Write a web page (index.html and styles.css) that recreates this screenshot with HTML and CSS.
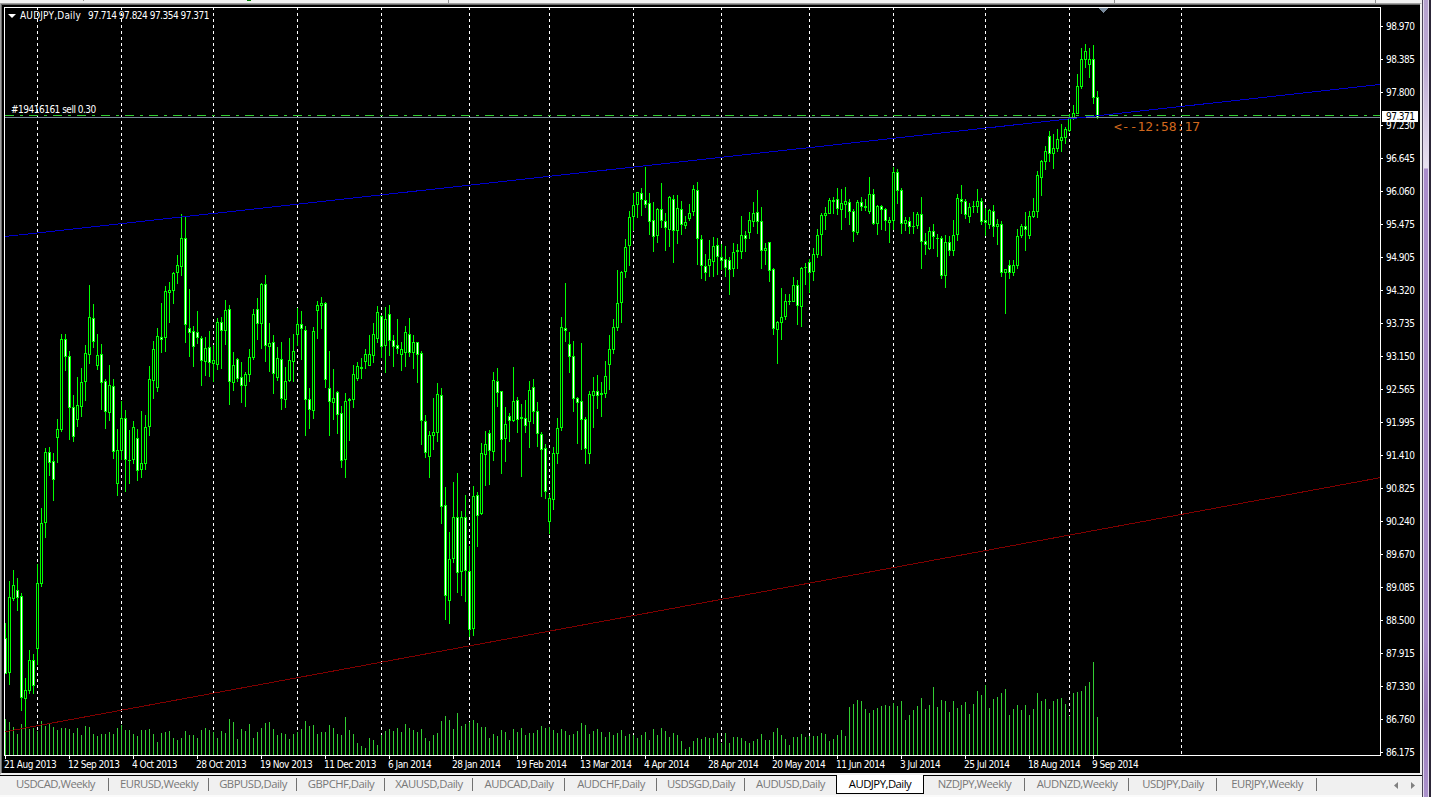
FILE: index.html
```html
<!DOCTYPE html>
<html lang="en">
<head>
    <meta charset="UTF-8">
    <title>AUDJPY,Daily</title>
    <link rel="stylesheet" href="styles.css">
</head>
<body>
    <div class="app">
        <div class="terminal">
            <div class="toolbar">
                <i class="sep sep-1"></i><i class="dot"></i><i class="sep sep-2"></i><i class="sep sep-3"></i><i class="sep sep-4"></i>
            </div>

            <div class="chart-window">
                <div class="plot">
                    <svg id="chart" width="1377" height="749" viewBox="4 7 1377 749" shape-rendering="crispEdges">
                        <g id="grid"></g>
                        <g id="volumes"></g>
                        <g id="candles"></g>
                        <line class="trend-low" x1="5" y1="731.7" x2="1380" y2="477.7"/>
                        <line class="order-line" x1="5" y1="115.5" x2="1380" y2="115.5"/>
                        <line class="bid-line" x1="5" y1="117.5" x2="1380" y2="117.5"/>
                        <line class="trend-high" x1="5" y1="236.5" x2="1380" y2="84.5"/>
                        <path class="shift" d="M1099 8h9v1h-1v1h-1v1h-1v1h-1v1h-1v-1h-1v-1h-1v-1h-1v-1h-1z"/>
                        <path class="frame" d="M4.5 756V7.5H1380.5V755.5H4"/>
                    </svg>
                    <div class="title"><span class="arrow"></span><span class="symbol">AUDJPY,Daily</span><span class="ohlc">97.714 97.824 97.354 97.371</span></div>
                    <div class="order">#19416161 sell 0.30</div>
                    <div class="countdown">&lt;--12:58:17</div>
                </div>
                <div class="prices" id="prices">
                    <div class="bid">97.371</div>
                </div>
                <div class="dates" id="dates"></div>
            </div>

            <div class="tabs">
                <div class="tab" style="width:107px">USDCAD,Weekly</div>
                <div class="tab" style="width:100px">EURUSD,Weekly</div>
                <div class="tab" style="width:88px">GBPUSD,Daily</div>
                <div class="tab" style="width:88px">GBPCHF,Daily</div>
                <div class="tab" style="width:88px">XAUUSD,Daily</div>
                <div class="tab" style="width:92px">AUDCAD,Daily</div>
                <div class="tab" style="width:92px">AUDCHF,Daily</div>
                <div class="tab" style="width:88px">USDSGD,Daily</div>
                <div class="tab last" style="width:91px">AUDUSD,Daily</div>
                <div class="tab active" style="width:88px">AUDJPY,Daily</div>
                <div class="tab" style="width:101px">NZDJPY,Weekly</div>
                <div class="tab" style="width:104px">AUDNZD,Weekly</div>
                <div class="tab" style="width:88px">USDJPY,Daily</div>
                <div class="tab" style="width:100px">EURJPY,Weekly</div>
                <div class="scroll">
                    <svg width="4" height="7"><path d="M4 0v7L0 3.5z"/></svg>
                    <svg width="4" height="7"><path d="M0 0v7l4-3.5z"/></svg>
                </div>
            </div>
        </div>
        <div class="edge"><div class="scroll-track"></div></div>
    </div>
    <script src="chart.js"></script>
</body>
</html>
```
FILE: styles.css
```css
body {
    margin: 0;
    background: #f0f0f0;
    font-family: "DejaVu Sans Condensed", "DejaVu Sans", sans-serif;
    font-stretch: condensed;
    font-size: 10px;
    letter-spacing: -0.5px;
    overflow: hidden;
}
.app {
    display: flex;
    width: 1431px;
    height: 797px;
}
.terminal {
    display: flex;
    flex-direction: column;
    width: 1422px;
}

/* bottom edge of the toolbar */
.toolbar {
    display: flex;
    height: 3px;
    background: #f0f0f0;
}
.sep {
    width: 1px;
    height: 3px;
    background: #909090;
}
.sep-1 {
    height: 1px;
    margin-left: 83px;
}
.dot {
    width: 4px;
    height: 1px;
    margin-left: 163px;
    background: #008000;
}
.sep-2 {
    margin-left: 197px;
}
.sep-3 {
    margin-left: 665px;
}
.sep-4 {
    margin-left: 260px;
}

/* chart window */
.chart-window {
    display: grid;
    grid-template-columns: 1377px 39px;
    grid-template-rows: 749px 17px;
    box-sizing: border-box;
    height: 772px;
    padding: 3px 0 0 2px;
    border-top: 1px solid #a0a0a0;
    border-left: 1px solid #a0a0a0;
    border-right: 2px solid #f0f0f0;
    border-bottom: 2px solid #f0f0f0;
    background: #000;
    box-shadow: inset 1px 1px #696969;
    color: #fff;
}
.plot {
    position: relative;
    margin-left: 1px;
}
.plot svg {
    display: block;
}
.month {
    stroke: #fff;
    stroke-dasharray: 3 3;
}
.volume {
    stroke: #32cd32;
}
.wick {
    stroke: #0f0;
}
.up {
    fill: #000;
    stroke: #0f0;
}
.down {
    fill: #fff;
    stroke: #0f0;
}
.trend-low {
    stroke: #800000;
}
.trend-high {
    stroke: #0000cd;
}
.order-line {
    stroke: #32cd32;
    stroke-dasharray: 9 6 3 6;
}
.bid-line {
    stroke: #778899;
}
.shift {
    fill: #778899;
}
.frame {
    fill: none;
    stroke: #fff;
}
.title {
    position: absolute;
    left: 4px;
    top: 2px;
    display: flex;
    align-items: center;
    height: 13px;
    white-space: pre;
}
.arrow {
    border: 4px solid transparent;
    border-top-color: #fff;
    border-bottom: 0;
    margin-right: 4px;
}
.symbol {
    width: 68px;
    letter-spacing: 0.2px;
}
.order {
    position: absolute;
    left: 7px;
    top: 96px;
    line-height: 13px;
}
.countdown {
    position: absolute;
    left: 1110px;
    top: 112px;
    font: 13px/16px "DejaVu Sans Mono", monospace;
    letter-spacing: 0;
    color: #d2691e;
}

/* axes */
.prices {
    position: relative;
    margin-left: 1px;
    padding-top: 3px;
}
.price {
    display: flex;
    align-items: center;
    height: 33px;
    line-height: 33px;
}
.price::before {
    content: "";
    width: 2px;
    height: 1px;
    margin-right: 3px;
    background: #fff;
}
.bid {
    position: absolute;
    left: 1px;
    top: 104px;
    width: 36px;
    height: 11px;
    line-height: 11px;
    text-indent: 4px;
    background: #fff;
    color: #000;
}
.dates {
    display: flex;
    grid-column: 1 / 3;
    margin-left: 1px;
}
.date {
    width: 64px;
    line-height: 17px;
    white-space: nowrap;
}
.date::before {
    content: "";
    display: block;
    width: 1px;
    height: 3px;
    margin: 0 0 -3px 1px;
    background: #fff;
}

/* chart tabs */
.tabs {
    display: flex;
    box-sizing: border-box;
    height: 22px;
    padding-left: 2px;
    border-top: 1px solid #000;
    border-bottom: 2px solid #fafafa;
    background: #f0f0f0;
    font: 11.3px/16px "Open Sans", sans-serif;
    letter-spacing: -0.5px;
    color: #787878;
}
.tab {
    position: relative;
    height: 18px;
    text-align: center;
    white-space: nowrap;
}
.tab::after {
    content: "";
    position: absolute;
    right: 0;
    top: 2px;
    width: 1px;
    height: 13px;
    background: #707070;
}
.tab.last::after,
.tab.active::after {
    display: none;
}
.tab.active {
    box-sizing: border-box;
    height: 19px;
    margin-top: -1px;
    padding-top: 1px;
    border: 1px solid #000;
    border-top: 0;
    background: #fff;
    color: #000;
}
.scroll {
    display: flex;
    gap: 13px;
    align-items: center;
    margin-left: auto;
    padding-right: 7px;
    fill: #808080;
}

/* window edge on the right */
.edge {
    box-sizing: border-box;
    width: 9px;
    border-left: 1px solid #4a4358;
    border-right: 2px solid #2c2638;
    background: #e4dcee;
}
.scroll-track {
    width: 4px;
    height: 797px;
    margin-left: 1px;
    background: linear-gradient(#b5a1ce, #bba8d2 60px, #e8e1f0 168px, #a98cca 169px, #a98cca 640px, #9878b8 710px, #ab92cc);
}
```
FILE: chart.js
```js
const SVG = 'http://www.w3.org/2000/svg';
const STEP = 4;
const FIRST = 5;
const BASE = 755;

// high, body top, body bottom, low, 1 = bearish
const candles = [
    [623,638,673,674,1],[581,597,672,685,0],[570,585,598,601,0],[578,590,597,611,1],[593,596,697,711,1],[678,690,698,727,0],
    [650,660,690,694,0],[654,660,685,694,1],[564,583,648,665,0],[508,523,583,587,0],[448,452,522,538,0],[447,452,462,476,1],
    [453,461,479,501,1],[419,429,437,463,0],[334,339,429,432,0],[334,339,356,371,1],[351,356,407,440,1],[395,407,436,442,1],
    [377,405,419,427,0],[368,382,406,417,0],[345,353,381,401,0],[285,317,354,364,0],[304,318,341,348,1],[334,355,365,370,0],
    [344,354,382,410,1],[379,381,411,429,1],[365,385,412,421,0],[379,386,451,459,1],[429,450,483,496,0],[401,418,450,460,0],
    [410,418,459,492,1],[430,460,460,484,0],[421,427,459,464,0],[429,438,470,481,1],[411,463,469,478,0],[415,427,463,470,0],
    [366,379,426,436,0],[341,349,380,399,0],[328,336,387,392,0],[303,337,339,353,1],[286,291,337,352,0],[282,290,292,323,0],
    [272,273,290,304,0],[255,265,272,284,0],[214,238,266,276,0],[217,238,324,343,1],[289,328,332,357,1],[326,331,346,367,1],
    [311,332,337,344,1],[336,338,360,386,1],[337,348,361,376,0],[331,347,362,377,1],[345,360,363,382,0],[318,322,364,370,0],
    [317,322,330,369,1],[300,310,330,345,0],[305,309,381,405,1],[352,365,382,391,0],[358,359,378,382,1],[362,377,385,403,1],
    [372,374,385,407,0],[349,357,374,382,0],[309,314,357,360,0],[298,309,323,340,1],[283,284,323,349,0],[275,284,345,362,1],
    [323,343,346,372,0],[335,342,373,394,1],[347,358,377,381,0],[342,359,398,410,1],[367,381,399,408,0],[338,360,380,382,0],
    [334,351,361,382,0],[308,324,334,346,0],[311,324,328,360,1],[326,330,399,436,1],[388,399,409,429,1],[327,331,410,419,0],
    [301,305,310,339,0],[297,303,305,329,0],[302,303,379,388,1],[351,388,401,436,1],[369,398,402,420,0],[391,392,414,434,1],
    [406,413,460,468,1],[393,401,459,478,0],[398,399,400,441,0],[365,374,399,408,0],[362,366,378,381,0],[358,367,368,379,0],
    [349,354,361,369,0],[335,354,365,366,0],[323,334,355,363,0],[306,312,338,343,0],[315,316,346,358,1],[307,319,345,373,0],
    [305,314,340,356,1],[335,340,346,367,1],[319,345,348,354,1],[342,349,354,371,0],[326,332,352,367,0],[318,334,352,357,1],
    [335,342,352,369,0],[342,342,354,383,1],[351,353,420,445,1],[415,421,452,458,1],[431,435,456,478,0],[398,432,435,450,0],
    [383,394,432,442,0],[388,395,506,524,1],[487,505,595,620,1],[532,559,600,624,0],[482,517,558,563,0],[473,517,572,593,1],
    [511,517,571,596,0],[495,517,570,602,1],[546,571,629,637,1],[486,496,628,636,0],[492,495,515,547,1],[443,453,513,515,0],
    [431,444,454,486,0],[430,433,450,485,1],[372,380,451,461,0],[368,381,392,407,1],[391,391,439,474,1],[407,424,438,462,0],
    [413,416,420,442,1],[367,401,420,422,0],[397,400,419,433,1],[404,417,418,477,0],[400,418,425,433,1],[381,390,421,448,0],
    [379,387,411,424,1],[402,411,433,447,1],[432,434,449,497,1],[444,448,491,499,1],[494,498,521,534,0],[447,453,499,510,0],
    [418,428,453,464,0],[317,327,427,431,0],[283,328,330,342,1],[332,344,356,373,1],[341,356,398,412,1],[397,398,402,444,1],
    [343,401,419,450,1],[417,419,448,464,1],[391,394,453,464,0],[377,391,395,428,0],[375,391,395,409,1],[382,393,394,417,0],
    [361,376,393,398,0],[335,349,364,390,0],[319,327,349,354,0],[270,303,327,331,0],[271,272,302,323,0],[239,247,271,278,0],
    [211,217,245,266,0],[193,205,216,231,0],[192,192,204,218,0],[188,193,199,216,1],[167,200,204,208,1],[193,203,221,235,1],
    [202,220,236,252,1],[208,209,235,243,0],[183,209,220,228,1],[213,221,227,251,1],[196,197,229,247,0],[195,199,230,263,1],
    [195,208,230,244,0],[201,209,224,235,1],[216,222,225,229,0],[204,213,218,221,0],[185,189,211,216,0],[182,190,238,265,1],
    [235,239,265,279,1],[254,266,272,281,1],[240,259,265,277,0],[237,246,261,277,0],[238,245,256,275,1],[244,257,260,270,1],
    [246,259,267,277,1],[257,260,269,295,1],[243,252,268,277,0],[244,250,251,269,0],[216,235,251,259,0],[231,235,238,252,1],
    [212,220,232,239,0],[202,213,221,227,0],[190,212,221,234,1],[207,221,250,269,1],[243,248,250,265,0],[242,242,270,282,1],
    [268,269,328,335,1],[321,322,329,364,0],[288,317,322,340,0],[294,301,316,320,0],[294,301,301,305,0],[277,285,301,302,0],
    [280,285,305,325,1],[267,268,306,327,0],[263,267,267,285,0],[259,262,272,293,1],[248,254,271,281,0],[229,235,254,258,0],
    [213,215,234,256,0],[207,213,215,230,0],[198,200,213,214,0],[197,200,201,214,0],[188,199,208,215,1],[189,203,209,230,0],
    [187,201,204,218,0],[199,202,211,225,1],[209,211,231,242,1],[200,202,232,235,0],[197,202,206,211,1],[199,206,207,211,0],
    [177,194,211,214,0],[189,194,223,225,1],[205,206,223,235,0],[205,206,209,230,1],[208,209,220,231,1],[217,220,222,243,0],
    [167,172,220,230,0],[169,172,190,204,1],[188,190,223,234,1],[217,220,223,231,0],[217,221,226,234,1],[212,226,226,234,0],
    [212,214,225,229,0],[197,214,241,269,1],[233,241,244,255,1],[227,231,248,250,0],[224,231,236,249,1],[234,238,238,257,0],
    [236,238,275,279,1],[235,242,275,288,0],[236,242,250,256,1],[220,235,250,256,0],[194,198,234,241,0],[185,199,201,214,1],
    [199,201,214,219,1],[203,207,216,223,0],[201,206,206,213,0],[189,201,206,213,0],[198,201,221,225,1],[208,220,222,236,1],
    [209,210,224,229,0],[205,211,226,237,1],[219,224,226,245,0],[221,224,272,277,1],[269,269,272,314,0],[260,265,272,279,1],
    [260,265,272,276,0],[229,236,265,269,0],[224,226,235,238,0],[212,226,229,251,1],[211,216,235,239,0],[198,211,216,218,0],
    [171,175,211,218,0],[160,161,177,196,0],[146,151,161,170,0],[131,136,153,162,1],[134,148,153,169,0],[129,139,148,152,0],
    [124,137,140,152,0],[127,129,137,144,0],[114,117,130,132,0],[105,113,117,120,0],[74,86,113,114,0],[48,59,86,89,0],
    [44,51,59,68,0],[48,59,64,78,0],[45,59,97,104,1],[91,97,117,119,1]
];

// top of each volume bar
const volumes = [
    719,722,727,734,724,726,729,728,731,721,726,724,727,730,728,728,729,733,728,735,726,727,734,736,734,734,732,734,728,725,
    730,730,734,736,730,730,729,734,742,733,732,731,738,740,738,731,735,735,738,730,728,730,732,738,731,733,719,722,739,729,
    731,724,738,732,728,723,722,729,735,733,734,739,734,732,729,721,726,725,734,732,732,725,728,734,735,717,730,734,743,746,
    748,738,740,745,735,731,729,731,728,732,724,728,730,732,729,738,741,735,733,721,716,720,729,713,726,724,722,720,723,727,
    727,738,734,736,730,732,740,729,732,728,735,733,733,730,726,728,727,730,733,729,731,735,734,731,723,725,734,731,729,732,
    737,732,735,733,730,736,734,735,738,735,732,740,729,735,728,731,737,733,735,741,749,747,741,738,739,737,738,738,733,743,
    733,743,737,737,738,741,743,741,739,734,740,740,732,728,735,739,745,737,737,734,737,736,736,736,733,734,741,739,735,730,
    736,707,704,700,701,709,713,710,708,706,705,706,703,706,701,720,715,710,706,698,709,705,687,707,700,701,712,701,708,705,
    702,714,704,691,695,685,708,699,697,693,689,715,709,705,710,705,715,709,693,701,699,709,701,699,698,704,716,693,692,691,
    686,682,662,717
];

const months = [37,121,213,297,381,469,549,633,721,809,893,985,1069,1181];

const prices = ['98.970','98.385','97.800','97.230','96.645','96.060','95.475','94.905','94.320','93.735','93.150','92.565',
    '91.995','91.410','90.825','90.240','89.670','89.085','88.500','87.915','87.330','86.760','86.175'];

const dates = ['21 Aug 2013','12 Sep 2013','4 Oct 2013','28 Oct 2013','19 Nov 2013','11 Dec 2013','6 Jan 2014','28 Jan 2014',
    '19 Feb 2014','13 Mar 2014','4 Apr 2014','28 Apr 2014','20 May 2014','11 Jun 2014','3 Jul 2014','25 Jul 2014',
    '18 Aug 2014','9 Sep 2014'];

function draw(parent, name, attrs) {
    const el = document.createElementNS(SVG, name);
    for (const key in attrs) el.setAttribute(key, attrs[key]);
    parent.appendChild(el);
}

function vline(parent, cls, x, y1, y2) {
    draw(parent, 'line', { class: cls, x1: x + 0.5, x2: x + 0.5, y1, y2 });
}

function label(parent, cls, text) {
    const el = document.createElement('div');
    el.className = cls;
    el.textContent = text;
    parent.appendChild(el);
}

const grid = document.getElementById('grid');
const volumeLayer = document.getElementById('volumes');
const candleLayer = document.getElementById('candles');

months.forEach(x => vline(grid, 'month', x, 7, BASE));
volumes.forEach((top, i) => vline(volumeLayer, 'volume', FIRST + i * STEP, top, BASE));

candles.forEach(([high, top, bottom, low, bearish], i) => {
    const x = FIRST + i * STEP;
    vline(candleLayer, 'wick', x, high, low);
    if (bottom === top) {
        draw(candleLayer, 'line', { class: 'wick', x1: x - 1, x2: x + 2, y1: top + 0.5, y2: top + 0.5 });
    } else {
        draw(candleLayer, 'rect', { class: bearish ? 'down' : 'up', x: x - 0.5, y: top + 0.5, width: 2, height: bottom - top });
    }
});

const priceAxis = document.getElementById('prices');
const bid = priceAxis.querySelector('.bid');
prices.forEach(p => label(priceAxis, 'price', p));
priceAxis.appendChild(bid);

dates.forEach(d => label(document.getElementById('dates'), 'date', d));
```
